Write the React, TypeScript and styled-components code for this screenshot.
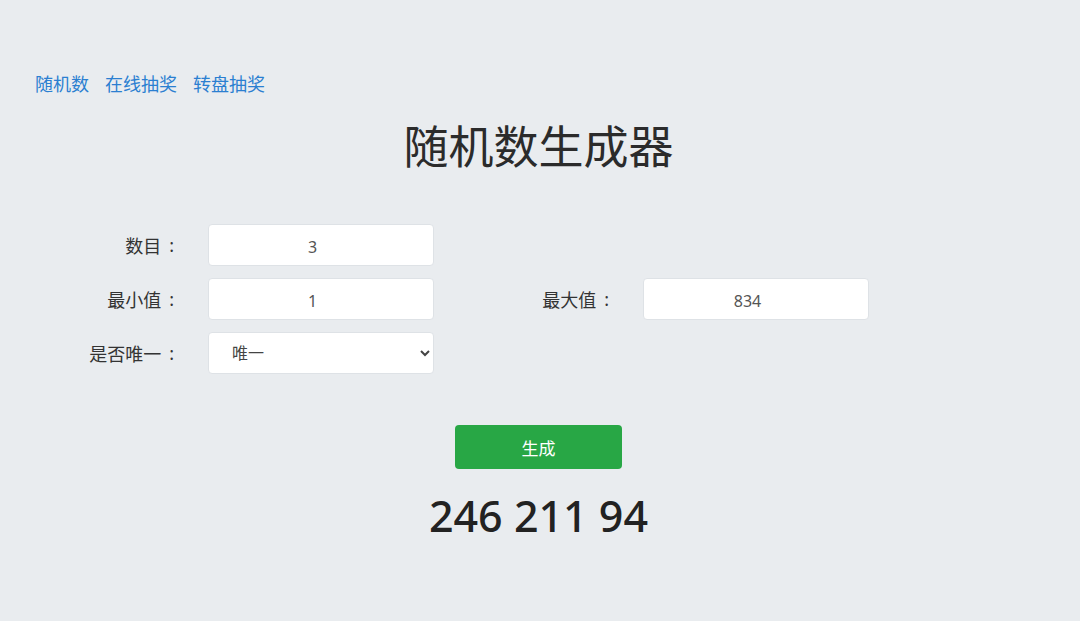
import * as React from 'react';
import styled, { createGlobalStyle } from 'styled-components';

const GlobalStyle = createGlobalStyle`
    html, body {
        margin: 0;
        padding: 0;
        background: #e9ecef;
        font-family: "Noto Sans", "Noto Sans CJK SC", sans-serif;
        color: #333;
    }
`;

const App = () => {
    return (
        <>
            <GlobalStyle />
            <DivPage>
                <NavLinks>
                    <NavLink href="#">随机数</NavLink>
                    <NavLink href="#">在线抽奖</NavLink>
                    <NavLink href="#">转盘抽奖</NavLink>
                </NavLinks>

                <Heading>随机数生成器</Heading>

                <FormGrid>
                    <Label>
                        数目<Colon>:</Colon>
                    </Label>
                    <TextInput defaultValue="3" />
                    <Spacer />
                    <Spacer />

                    <Label>
                        最小值<Colon>:</Colon>
                    </Label>
                    <TextInput defaultValue="1" />
                    <Label>
                        最大值<Colon>:</Colon>
                    </Label>
                    <TextInput defaultValue="834" />

                    <Label>
                        是否唯一<Colon>:</Colon>
                    </Label>
                    <Select defaultValue="unique">
                        <option value="unique">唯一</option>
                        <option value="repeat">可重复</option>
                    </Select>
                </FormGrid>

                <ButtonRow>
                    <GenerateButton>生成</GenerateButton>
                </ButtonRow>

                <Result>246 211 94</Result>
            </DivPage>
        </>
    );
};

const DivPage = styled.div`
    width: 1077px;
    height: 621px;
    padding-top: 71px;
    box-sizing: border-box;
`;

const NavLinks = styled.nav`
    display: flex;
    gap: 16px;
    padding-left: 35px;
`;

const NavLink = styled.a`
    font-size: 18px;
    line-height: 26px;
    color: #2b7fd1;
    text-decoration: none;
`;

const Heading = styled.h1`
    margin: 18px 0 0;
    text-align: center;
    font-size: 45px;
    line-height: 64px;
    font-weight: 400;
    color: #2b2b2b;
`;

const FormGrid = styled.div`
    display: grid;
    grid-template-columns: 175px 226px 143px 226px;
    grid-auto-rows: 42px;
    column-gap: 33px;
    row-gap: 12px;
    margin-top: 45px;
`;

const Spacer = styled.div``;

const Label = styled.label`
    display: flex;
    align-items: center;
    justify-content: flex-end;
    font-size: 18px;
    color: #333;
    white-space: nowrap;
`;

const Colon = styled.span`
    margin-left: 8px;
    margin-right: 1px;
`;

const TextInput = styled.input`
    box-sizing: border-box;
    width: 100%;
    height: 42px;
    padding: 3px 17px 0 0;
    border: 1px solid #dee2e6;
    border-radius: 4px;
    background: #fff;
    text-align: center;
    font-family: "Noto Sans", "Noto Sans CJK SC", sans-serif;
    font-size: 16px;
    color: #555;
    outline: none;
`;

const Select = styled.select`
    box-sizing: border-box;
    width: 100%;
    height: 42px;
    border: 1px solid #dee2e6;
    border-radius: 4px;
    background: #fff;
    padding: 0 8px 0 19px;
    font-family: "Noto Sans", "Noto Sans CJK SC", sans-serif;
    font-size: 16px;
    color: #444;
    outline: none;
`;

const ButtonRow = styled.div`
    display: flex;
    justify-content: center;
    margin-top: 51px;
`;

const GenerateButton = styled.button`
    width: 167px;
    height: 44px;
    border: none;
    border-radius: 4px;
    background: #28a745;
    color: #fff;
    font-family: "Noto Sans", "Noto Sans CJK SC", sans-serif;
    font-size: 17px;
    cursor: pointer;
`;

const Result = styled.div`
    margin-top: 18px;
    text-align: center;
    font-size: 43px;
    line-height: 58px;
    font-weight: 500;
    color: #222;
`;

export default App;
